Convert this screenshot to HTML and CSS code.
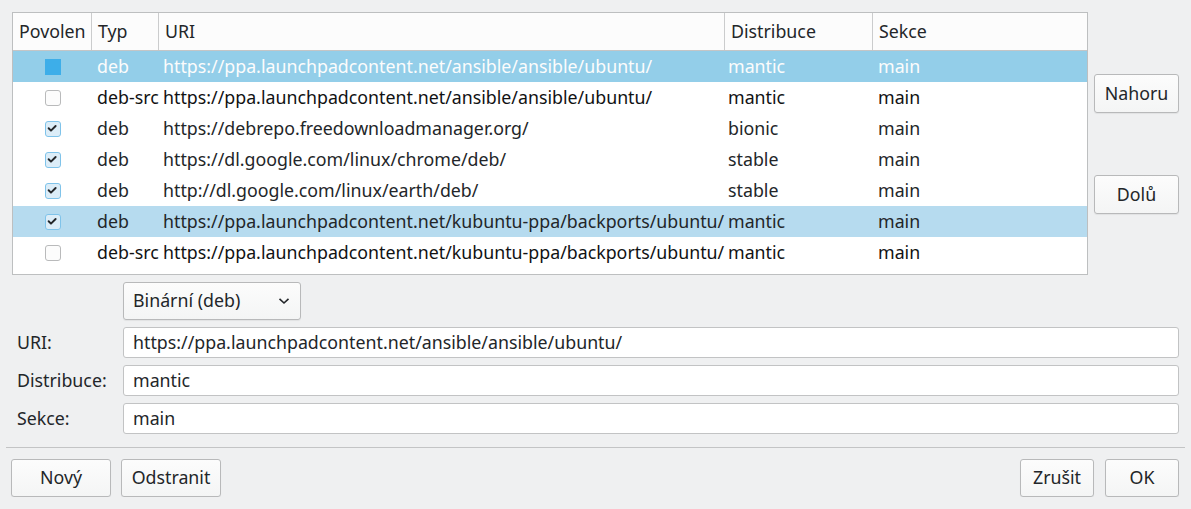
FILE: index.html
```html
<!DOCTYPE html>
<html lang="cs">
<head>
<meta charset="utf-8">
<title>Zdroje softwaru</title>
<link rel="stylesheet" href="styles.css">
</head>
<body>
<div class="dialog">
  <div class="top">
    <div class="table">
      <div class="thead">
        <div class="th">Povolen</div>
        <div class="th">Typ</div>
        <div class="th">URI</div>
        <div class="th">Distribuce</div>
        <div class="th last">Sekce</div>
      </div>
      <div class="row current">
        <div class="cell chk"><span class="box focus"></span></div>
        <div class="cell typ">deb</div>
        <div class="cell uri">https://ppa.launchpadcontent.net/ansible/ansible/ubuntu/</div>
        <div class="cell dist">mantic</div>
        <div class="cell sec">main</div>
      </div>
      <div class="row strong">
        <div class="cell chk"><span class="box"></span></div>
        <div class="cell typ">deb-src</div>
        <div class="cell uri">https://ppa.launchpadcontent.net/ansible/ansible/ubuntu/</div>
        <div class="cell dist">mantic</div>
        <div class="cell sec">main</div>
      </div>
      <div class="row">
        <div class="cell chk"><span class="box on"><svg viewBox="0 0 16 16"><path d="M4 8.2l2.7 2.7L12 5.6"/></svg></span></div>
        <div class="cell typ">deb</div>
        <div class="cell uri">https://debrepo.freedownloadmanager.org/</div>
        <div class="cell dist">bionic</div>
        <div class="cell sec">main</div>
      </div>
      <div class="row">
        <div class="cell chk"><span class="box on"><svg viewBox="0 0 16 16"><path d="M4 8.2l2.7 2.7L12 5.6"/></svg></span></div>
        <div class="cell typ">deb</div>
        <div class="cell uri">https://dl.google.com/linux/chrome/deb/</div>
        <div class="cell dist">stable</div>
        <div class="cell sec">main</div>
      </div>
      <div class="row">
        <div class="cell chk"><span class="box on"><svg viewBox="0 0 16 16"><path d="M4 8.2l2.7 2.7L12 5.6"/></svg></span></div>
        <div class="cell typ">deb</div>
        <div class="cell uri">http://dl.google.com/linux/earth/deb/</div>
        <div class="cell dist">stable</div>
        <div class="cell sec">main</div>
      </div>
      <div class="row selected">
        <div class="cell chk"><span class="box on"><svg viewBox="0 0 16 16"><path d="M4 8.2l2.7 2.7L12 5.6"/></svg></span></div>
        <div class="cell typ">deb</div>
        <div class="cell uri">https://ppa.launchpadcontent.net/kubuntu-ppa/backports/ubuntu/</div>
        <div class="cell dist">mantic</div>
        <div class="cell sec">main</div>
      </div>
      <div class="row strong">
        <div class="cell chk"><span class="box"></span></div>
        <div class="cell typ">deb-src</div>
        <div class="cell uri">https://ppa.launchpadcontent.net/kubuntu-ppa/backports/ubuntu/</div>
        <div class="cell dist">mantic</div>
        <div class="cell sec">main</div>
      </div>
    </div>
    <div class="side">
      <button class="btn side-btn">Nahoru</button>
      <button class="btn side-btn">Dolů</button>
    </div>
  </div>

  <div class="form">
    <div class="label"></div>
    <div class="combo"><span>Binární (deb)</span><svg class="chev" viewBox="0 0 12 8"><path d="M1.5 1.8l4.5 4.2 4.5-4.2"/></svg></div>
    <div class="label">URI:</div>
    <div class="input">https://ppa.launchpadcontent.net/ansible/ansible/ubuntu/</div>
    <div class="label">Distribuce:</div>
    <div class="input">mantic</div>
    <div class="label">Sekce:</div>
    <div class="input">main</div>
  </div>

  <div class="sep"></div>

  <div class="bottom">
    <div class="group">
      <button class="btn wide">Nový</button>
      <button class="btn wide">Odstranit</button>
    </div>
    <div class="group right">
      <button class="btn narrow">Zrušit</button>
      <button class="btn narrow">OK</button>
    </div>
  </div>
</div>
</body>
</html>
```
FILE: styles.css
```css
html, body {
  margin: 0;
  padding: 0;
  background: #eff0f1;
}
body {
  font-family: "Noto Sans", "DejaVu Sans", sans-serif;
  font-size: 17.8px;
  color: #232629;
}
.dialog {
  padding: 12px 12px 0 12px;
  width: 1167px;
}
.top {
  display: flex;
  gap: 6px;
  height: 263px;
}
.table {
  width: 1074px;
  height: 261px;
  border: 1px solid #bdbfc0;
  background: #ffffff;
  overflow: hidden;
}
.thead, .row {
  display: grid;
  grid-template-columns: 79px 67px 566px 148px 1fr;
}
.thead {
  height: 37px;
  border-bottom: 1px solid #c4c5c6;
  background: #fcfcfc;
}
.th {
  display: flex;
  align-items: center;
  padding-left: 6px;
  padding-bottom: 2px;
  border-right: 1px solid #cbcccd;
  white-space: nowrap;
}
.th.last { border-right: none; }
.row {
  height: 31px;
  align-items: center;
}
.cell {
  white-space: nowrap;
  padding-left: 4px;
  padding-bottom: 2px;
  overflow: hidden;
}
.cell.typ { padding-left: 5px; }
.cell.dist { padding-left: 3px; }
.cell.sec { padding-left: 5px; }
.row.strong .cell { color: #111213; }
.row.current { background: #93cee9; }
.row.current .cell { color: #fcfcfc; }
.row.selected { background: #b6dbef; }
.cell.chk {
  display: flex;
  align-items: center;
  padding-left: 32px;
  padding-bottom: 0;
}
.box {
  display: block;
  width: 14px;
  height: 14px;
  border: 1px solid #b9babb;
  border-radius: 3px;
  background: #fcfcfc;
}
.box.focus {
  width: 16px;
  height: 16px;
  border: none;
  border-radius: 0;
  background: #3daee9;
}
.box.on {
  border-color: #7fc3ea;
  background: #dcedf8;
}
.box svg {
  display: block;
  width: 14px;
  height: 14px;
  margin: 0;
}
.box svg path {
  fill: none;
  stroke: #232629;
  stroke-width: 2.2;
  stroke-linecap: round;
  stroke-linejoin: round;
  transform: translate(-1px, -1px);
}
.side {
  display: flex;
  flex-direction: column;
  padding-top: 62px;
  gap: 62px;
}
.btn {
  font-family: inherit;
  font-size: inherit;
  color: #232629;
  background: linear-gradient(#fcfcfc, #f4f5f5);
  border: 1px solid #b8b9ba;
  border-radius: 3px;
  box-shadow: 0 1px 1px rgba(0, 0, 0, 0.06);
  padding: 0 0 2px 0;
  margin: 0;
}
.side-btn {
  width: 85px;
  height: 39px;
}
.form {
  display: grid;
  grid-template-columns: 111px 1056px;
  row-gap: 7px;
  margin-top: 7px;
  align-items: center;
}
.label {
  padding-left: 5px;
  padding-bottom: 2px;
}
.combo {
  box-sizing: border-box;
  width: 178px;
  height: 38px;
  border: 1px solid #b8b9ba;
  border-radius: 3px;
  background: linear-gradient(#fcfcfc, #f4f5f5);
  box-shadow: 0 1px 1px rgba(0, 0, 0, 0.06);
  display: flex;
  align-items: center;
  justify-content: space-between;
  padding: 0 10px 2px 9px;
}
.chev {
  width: 12px;
  height: 8px;
  margin-top: 2px;
}
.chev path {
  fill: none;
  stroke: #232629;
  stroke-width: 1.6;
}
.input {
  box-sizing: border-box;
  height: 31px;
  border: 1px solid #c2c3c4;
  border-radius: 3px;
  background: #ffffff;
  display: flex;
  align-items: center;
  padding-left: 9px;
  padding-bottom: 2px;
  white-space: nowrap;
}
.sep {
  height: 1px;
  background: #c3c4c5;
  margin: 13px -6px 0 -6px;
}
.bottom {
  display: flex;
  justify-content: space-between;
  margin-top: 11px;
}
.group {
  display: flex;
  gap: 10px;
  margin-left: -1px;
}
.group.right {
  gap: 11px;
  margin-left: 0;
}
.wide {
  width: 100px;
  height: 38px;
}
.narrow {
  width: 74px;
  height: 38px;
}
```
